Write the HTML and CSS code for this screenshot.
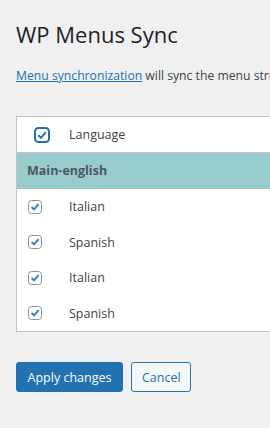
FILE: index.html
```html
<!DOCTYPE html>
<html>
<head>
<meta charset="utf-8">
<link rel="stylesheet" href="styles.css">
</head>
<body>
<div class="wrap">
  <h1 class="title">WP Menus Sync</h1>
  <p class="intro"><a href="#" class="link">Menu synchronization</a> will sync the menu structure across all languages of your site.</p>
  <div class="table">
    <div class="head-row">
      <span class="cb cb-head"><svg viewBox="0 0 16 16" width="16" height="16"><rect x="1" y="1" width="14" height="14" rx="3.5" fill="#fff" stroke="#2271b1" stroke-width="2"/><path d="M4.3 8.2 L7 10.8 L11.8 5.2" fill="none" stroke="#2271b1" stroke-width="2"/></svg></span>
      <span class="label">Language</span>
    </div>
    <div class="group-row">Main-english</div>
    <div class="row"><span class="cb"><svg viewBox="0 0 14 14" width="14" height="14"><rect x="0.5" y="0.5" width="13" height="13" rx="3" fill="#fff" stroke="#8c8f94"/><path d="M3.6 7 L6 9.4 L10.6 4.2" fill="none" stroke="#3582c4" stroke-width="2"/></svg></span><span class="label">Italian</span></div>
    <div class="row"><span class="cb"><svg viewBox="0 0 14 14" width="14" height="14"><rect x="0.5" y="0.5" width="13" height="13" rx="3" fill="#fff" stroke="#8c8f94"/><path d="M3.6 7 L6 9.4 L10.6 4.2" fill="none" stroke="#3582c4" stroke-width="2"/></svg></span><span class="label">Spanish</span></div>
    <div class="row"><span class="cb"><svg viewBox="0 0 14 14" width="14" height="14"><rect x="0.5" y="0.5" width="13" height="13" rx="3" fill="#fff" stroke="#8c8f94"/><path d="M3.6 7 L6 9.4 L10.6 4.2" fill="none" stroke="#3582c4" stroke-width="2"/></svg></span><span class="label">Italian</span></div>
    <div class="row"><span class="cb"><svg viewBox="0 0 14 14" width="14" height="14"><rect x="0.5" y="0.5" width="13" height="13" rx="3" fill="#fff" stroke="#8c8f94"/><path d="M3.6 7 L6 9.4 L10.6 4.2" fill="none" stroke="#3582c4" stroke-width="2"/></svg></span><span class="label">Spanish</span></div>
  </div>
  <div class="actions">
    <button class="btn btn-primary">Apply changes</button>
    <button class="btn btn-secondary">Cancel</button>
  </div>
</div>
</body>
</html>
```
FILE: styles.css
```css
html, body {
  margin: 0;
  padding: 0;
  background: #f0f0f1;
  overflow: hidden;
}
body {
  font-family: "Open Sans", "Noto Sans", sans-serif;
  color: #3c434a;
  font-size: 13px;
}
.wrap {
  width: 700px;
  padding: 0 16px;
}
.title {
  margin: 0;
  padding-top: 19px;
  font-size: 22px;
  line-height: 30px;
  font-weight: 400;
  color: #1d2327;
}
.intro {
  margin: 18px 0 0;
  font-size: 12.2px;
  line-height: 18px;
  white-space: nowrap;
}
.link {
  color: #2271b1;
  text-decoration: underline;
}
.table {
  margin-top: 31px;
  border: 1px solid #c3c4c7;
  background: #fff;
}
.head-row {
  display: flex;
  align-items: center;
  height: 35px;
  border-bottom: 1px solid #c3c4c7;
  padding-left: 17px;
}
.head-row .cb {
  width: 16px;
  height: 16px;
}
.head-row .label {
  margin-left: 19px;
}
.cb {
  display: flex;
}
.group-row {
  background: #99cccc;
  height: 36px;
  line-height: 36px;
  padding-left: 10px;
  font-weight: 700;
  font-size: 12.5px;
  color: #50575e;
}
.row {
  display: flex;
  align-items: center;
  height: 35.5px;
  padding-left: 11px;
}
.row .label {
  margin-left: 27px;
}
.label {
  font-size: 12.5px;
  color: #3c434a;
}
.actions {
  display: flex;
  gap: 8px;
  margin-top: 30px;
}
.btn {
  font-family: "Open Sans", "Noto Sans", sans-serif;
  font-size: 12.5px;
  height: 30px;
  border-radius: 3px;
  padding: 0 10px;
  cursor: pointer;
}
.btn-primary {
  width: 107px;
  background: #2271b1;
  border: 1px solid #2271b1;
  color: #fff;
}
.btn-secondary {
  width: 60px;
  background: #f6f7f7;
  border: 1px solid #2271b1;
  color: #2271b1;
}
```
